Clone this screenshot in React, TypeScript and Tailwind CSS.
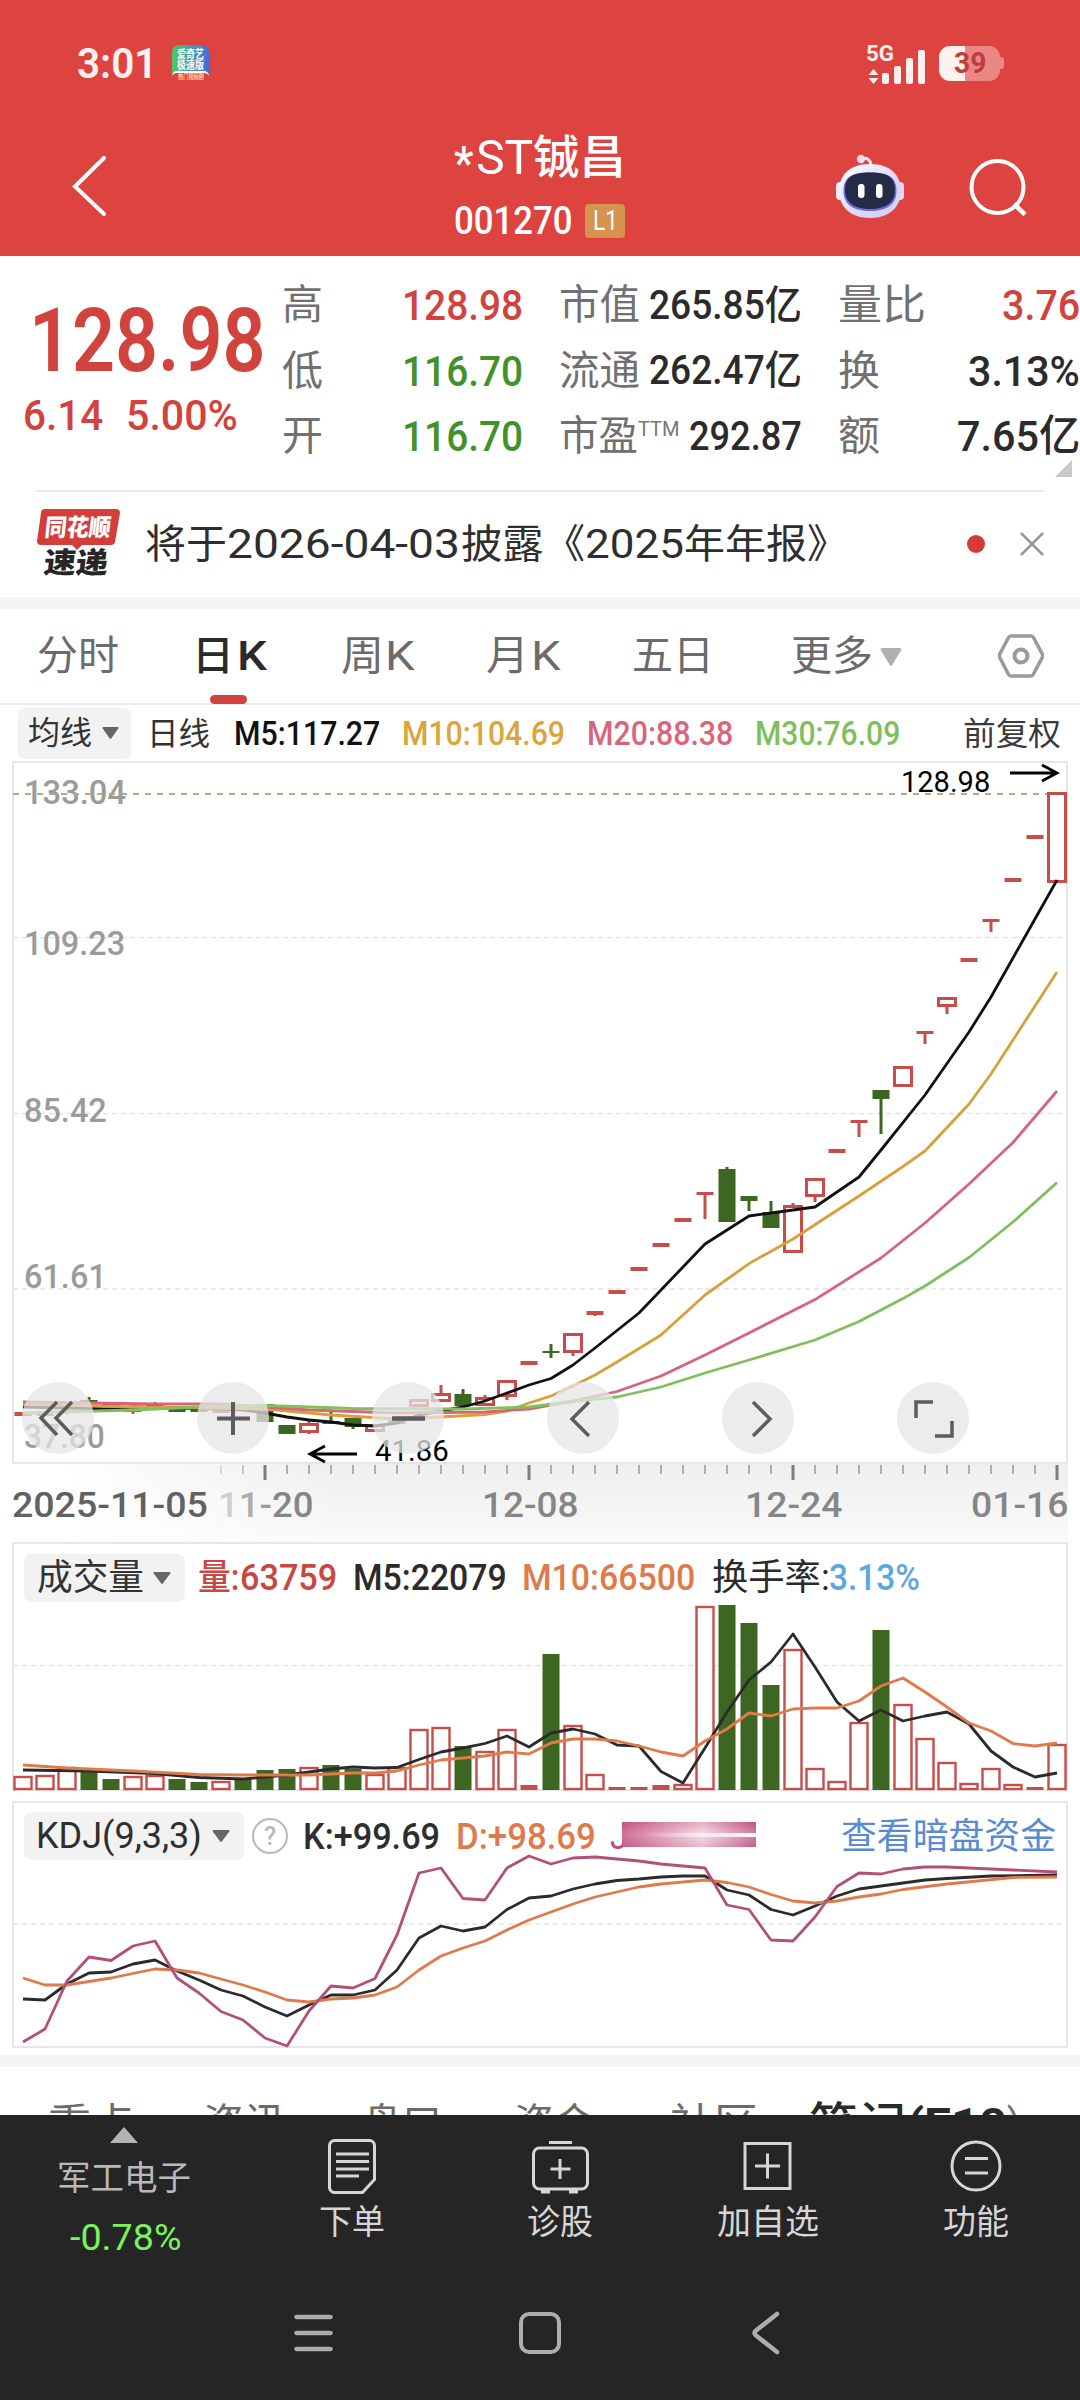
import { useLayoutEffect, useRef, useState } from 'react';
import type { ReactNode } from 'react';
import clsx from 'clsx';

const RED = '#c84c4a';
const GREEN = '#3c6621';

// x centre of the i-th trading day inside a panel
const dayX = (i: number) => 23 + i * 22;

type Point = [number, number];

// [kind, bodyTop, bodyBottom, high, low]
type Candle = ['r' | 'g', number, number, number, number];

const CANDLES: Candle[] = [
  ['r', 1412, 1416, 1412, 1416],
  ['r', 1411, 1416, 1411, 1416],
  ['g', 1404, 1408, 1403, 1414],
  ['g', 1400, 1403, 1397, 1404],
  ['g', 1404, 1407, 1404, 1409],
  ['r', 1410, 1412, 1407, 1414],
  ['r', 1403, 1406, 1402, 1406],
  ['g', 1408, 1412, 1408, 1412],
  ['g', 1408, 1412, 1408, 1412],
  ['r', 1409, 1413, 1409, 1413],
  ['r', 1405, 1408, 1405, 1408],
  ['g', 1404, 1422, 1404, 1422],
  ['g', 1425, 1434, 1425, 1434],
  ['r', 1423, 1433, 1420, 1434],
  ['g', 1421, 1424, 1411, 1424],
  ['g', 1418, 1427, 1418, 1429],
  ['r', 1424, 1432, 1424, 1432],
  ['r', 1420, 1424, 1420, 1424],
  ['r', 1399, 1407, 1399, 1407],
  ['r', 1393, 1402, 1385, 1402],
  ['g', 1394, 1406, 1389, 1406],
  ['r', 1397, 1406, 1395, 1406],
  ['r', 1380, 1397, 1380, 1400],
  ['r', 1361, 1365, 1361, 1365],
  ['g', 1351, 1353, 1344, 1358],
  ['r', 1333, 1353, 1333, 1356],
  ['r', 1311, 1315, 1311, 1316],
  ['r', 1290, 1294, 1290, 1294],
  ['r', 1267, 1271, 1267, 1271],
  ['r', 1243, 1247, 1243, 1247],
  ['r', 1218, 1222, 1218, 1222],
  ['r', 1192, 1195, 1192, 1219],
  ['g', 1169, 1222, 1167, 1222],
  ['g', 1196, 1201, 1196, 1211],
  ['g', 1212, 1228, 1201, 1228],
  ['r', 1205, 1253, 1203, 1253],
  ['r', 1178, 1197, 1178, 1202],
  ['r', 1149, 1153, 1149, 1153],
  ['r', 1120, 1123, 1120, 1137],
  ['g', 1090, 1099, 1090, 1134],
  ['r', 1066, 1087, 1066, 1087],
  ['r', 1031, 1034, 1031, 1044],
  ['r', 997, 1007, 997, 1014],
  ['r', 958, 962, 958, 962],
  ['r', 919, 922, 919, 932],
  ['r', 878, 882, 878, 882],
  ['r', 835, 839, 835, 839],
  ['r', 792, 883, 792, 883],
];

const MA5: Point[] = [
  [0, 1407], [4, 1409], [5, 1407], [9, 1409], [10, 1410], [11, 1413], [12, 1417], [13, 1420], [14, 1422], [15, 1425],
  [16, 1426], [17, 1423], [18, 1415], [19, 1411], [20, 1407], [21, 1401], [22, 1393], [23, 1385], [24, 1378.5],
  [25, 1365], [26, 1348], [28, 1313], [31, 1244], [33, 1216], [36, 1207], [38, 1177], [39, 1150], [41, 1095],
  [43, 1032], [44, 997], [47, 880],
];
const MA10: Point[] = [
  [0, 1404], [5, 1407], [11, 1409], [14, 1415], [17, 1419], [19, 1417], [21, 1414.5], [22, 1411], [23, 1403], [24, 1396],
  [25, 1386], [26, 1375], [27, 1362], [29, 1335], [31, 1295], [33, 1263.6], [35, 1239], [38, 1196], [40, 1166.5],
  [41, 1151], [43, 1104], [44, 1074], [47, 972],
];
const MA20: Point[] = [
  [0, 1402], [6, 1404], [9, 1404], [13, 1410], [17, 1413], [21, 1412], [23, 1409], [25, 1401], [27, 1391.5], [29, 1376],
  [31, 1355], [33, 1333], [36, 1299.6], [39, 1258], [41, 1223], [43, 1184], [45, 1142.5], [47, 1091],
];
const MA30: Point[] = [
  [0, 1413], [5, 1410], [8, 1407], [11, 1405.5], [15, 1408.5], [20, 1409], [23, 1407], [25, 1401.5], [27, 1397],
  [29, 1387], [31, 1373], [33, 1360], [36, 1340], [38, 1321.5], [40, 1298.6], [41, 1286], [43, 1257.5], [45, 1222],
  [47, 1182.5],
];

const VOLUMES: ['r' | 'g', number][] = [
  ['r', 1776], ['r', 1775], ['r', 1767], ['g', 1772], ['g', 1779], ['r', 1776], ['r', 1775], ['g', 1779], ['g', 1782],
  ['r', 1781], ['g', 1779], ['g', 1770], ['g', 1769], ['r', 1767], ['g', 1765], ['g', 1769], ['r', 1774], ['r', 1767],
  ['r', 1729], ['r', 1727], ['g', 1746], ['r', 1751], ['r', 1729], ['r', 1785], ['g', 1654], ['r', 1725], ['r', 1774],
  ['r', 1787], ['r', 1787], ['r', 1785], ['r', 1784], ['r', 1606], ['g', 1605], ['g', 1623], ['g', 1685], ['r', 1649],
  ['r', 1768], ['r', 1781], ['r', 1722], ['g', 1630], ['r', 1704], ['r', 1738], ['r', 1762], ['r', 1783], ['r', 1768],
  ['r', 1784], ['r', 1787], ['r', 1744],
];
const VOL5: Point[] = [
  [0, 1770], [3, 1771], [6, 1773.5], [8, 1777.5], [10, 1779], [11, 1777], [12, 1775], [13, 1772], [14, 1769], [15, 1767],
  [16, 1768], [17, 1767.5], [18, 1759.5], [19, 1752], [20, 1748], [21, 1743.5], [22, 1736], [23, 1747], [24, 1733],
  [25, 1729], [26, 1734], [27, 1745], [28, 1746], [29, 1771.5], [30, 1783], [31, 1748], [32, 1712], [33, 1680],
  [34, 1662], [35, 1634], [36, 1667], [37, 1702], [38, 1721], [39, 1710], [40, 1721], [41, 1716], [42, 1712],
  [43, 1724], [44, 1751], [45, 1767], [46, 1777], [47, 1773],
];
const VOL10: Point[] = [
  [0, 1765], [2, 1768], [5, 1771], [8, 1774.5], [10, 1775], [13, 1775], [15, 1773], [16, 1773], [17, 1771], [18, 1765],
  [19, 1760], [20, 1758], [21, 1756], [22, 1752], [23, 1754], [24, 1743], [25, 1739], [26, 1739], [27, 1741],
  [28, 1746], [29, 1752], [30, 1756], [31, 1741], [32, 1729], [33, 1713], [34, 1716], [35, 1709], [36, 1708],
  [37, 1708], [38, 1701], [39, 1686], [40, 1678], [41, 1692], [42, 1707], [43, 1723], [44, 1731], [45, 1743.5],
  [46, 1746], [47, 1743],
];

const K_LINE: Point[] = [
  [0, 1999], [1, 2000], [2, 1984], [3, 1973], [4, 1972], [5, 1964], [6, 1960], [7, 1971], [8, 1980], [9, 1990],
  [10, 1996], [11, 2007], [12, 2016], [13, 2005], [14, 1995], [15, 1995], [16, 1990], [17, 1970], [18, 1938],
  [19, 1926], [20, 1931], [21, 1927], [22, 1909.5], [23, 1898], [24, 1896], [25, 1889], [26, 1884], [27, 1880.5],
  [28, 1879], [29, 1877], [30, 1876], [31, 1876], [32, 1890], [33, 1895], [34, 1909.5], [35, 1915], [36, 1906],
  [37, 1896], [38, 1889], [39, 1886], [40, 1883], [41, 1880], [42, 1878.5], [44, 1876], [47, 1875],
];
const D_LINE: Point[] = [
  [0, 1978], [1, 1985], [2, 1985], [4, 1978], [6, 1969], [7, 1970], [8, 1973], [10, 1985], [11, 1992], [12, 2000],
  [13, 2002], [14, 1999], [15, 1998], [16, 1995], [17, 1987], [18, 1970], [19, 1956], [20, 1948], [21, 1941],
  [22, 1930], [23, 1920], [24, 1912], [25, 1904], [26, 1897], [27, 1892], [28, 1887], [29, 1884], [31, 1880],
  [32, 1882.5], [33, 1887], [34, 1894.5], [35, 1901], [36, 1903], [37, 1901], [38, 1897], [39, 1894], [40, 1889.5],
  [42, 1884], [45, 1877.5], [47, 1877],
];
const J_LINE: Point[] = [
  [0, 2042], [1, 2029], [2, 1981], [3, 1957], [4, 1960.5], [5, 1946], [6, 1941], [7, 1978], [8, 1993], [9, 2011.5],
  [10, 2020], [11, 2038], [12, 2046], [13, 2011], [14, 1986], [15, 1988], [16, 1978.5], [17, 1935], [18, 1873],
  [19, 1868], [20, 1898.5], [21, 1900], [22, 1868], [23, 1856], [24, 1864], [25, 1858], [26, 1857], [27, 1859],
  [28, 1861], [29, 1864], [30, 1866], [31, 1868], [32, 1905], [33, 1909.5], [34, 1940], [35, 1941], [36, 1917],
  [37, 1886.5], [38, 1873], [39, 1874], [40, 1869], [41, 1867], [42, 1867], [44, 1869], [47, 1872],
];

// Condenses or stretches a run of text to a fixed width
function Fit({ w, className, children }: { w: number; className?: string; children: ReactNode }) {
  const ref = useRef<HTMLSpanElement>(null);
  const [scale, setScale] = useState(1);
  useLayoutEffect(() => {
    if (ref.current) setScale(w / ref.current.offsetWidth);
  }, [w]);
  return (
    <span className={clsx('block shrink-0 whitespace-nowrap leading-none', className)} style={{ width: w }}>
      <span ref={ref} className="inline-block origin-left" style={{ transform: `scaleX(${scale})` }}>
        {children}
      </span>
    </span>
  );
}

function Line({ points, color, width = 2.8 }: { points: Point[]; color: string; width?: number }) {
  return (
    <polyline
      points={points.map(([i, y]) => `${dayX(i)},${y}`).join(' ')}
      fill="none"
      stroke={color}
      strokeWidth={width}
      strokeLinejoin="round"
    />
  );
}

function Caret({ className }: { className?: string }) {
  return (
    <svg className={clsx('shrink-0', className)} viewBox="0 0 18 12" preserveAspectRatio="none">
      <path d="M1.5 0h15a1 1 0 0 1 .8 1.600L9.800 11.500a1 1 0 0 1-1.600 0L.7 1.600A1 1 0 0 1 1.500 0Z" fill="currentColor" />
    </svg>
  );
}

function StatusBar() {
  return (
    <div className="flex h-[126px] items-center pl-[77px]">
      <Fit w={80} className="text-[43px] font-semibold text-[#fff1f0]">3:01</Fit>
      <div className="ml-[15px] flex h-[36px] w-[37px] flex-col items-center rounded-[7px] bg-linear-to-r from-[#4fc765] to-[#4a68dc] pt-[4px]">
        <Fit w={27} className="text-[11px] font-bold text-white">爱奇艺</Fit>
        <Fit w={27} className="text-[11px] font-bold text-white">极速版</Fit>
        <div className="flex w-full flex-1 items-center justify-center rounded-t-[5px] border-t-2 border-white bg-[#dd4440]">
          <Fit w={26} className="text-[7px] font-bold text-[#ffd9a0]">热门视频剧</Fit>
        </div>
      </div>
      <svg className="ml-[658px] h-[42px] w-[62px] overflow-visible" viewBox="0 0 62 42">
        <text x="-1" y="19" fontSize="22" fontWeight="700" fill="#ffefee" textLength="28" lengthAdjust="spacingAndGlyphs">5G</text>
        <path d="M6.500 27l5 6h-10zM6.500 42l5-6h-10z" fill="#ffefee" />
        <rect x="15" y="31" width="7" height="11" rx="2" fill="#ffefee" />
        <rect x="27" y="24" width="7" height="18" rx="2" fill="#ffefee" />
        <rect x="39" y="16" width="7" height="26" rx="2" fill="#ffefee" />
        <rect x="51" y="8" width="7" height="34" rx="2" fill="#ffefee" />
      </svg>
      <div className="ml-[10px] flex items-center">
        <div className="flex h-[35px] w-[61px] items-center justify-center rounded-[11px] bg-linear-to-r from-[#fff1f0] from-42% to-[#ec8684] to-42%">
          <Fit w={32} className="text-[29px] font-bold text-[#bd3e3a]">39</Fit>
        </div>
        <div className="h-[12px] w-[4px] rounded-r-[3px] bg-[#ec8684]" />
      </div>
    </div>
  );
}

function RobotIcon() {
  return (
    <svg className="h-[66px] w-[70px]" viewBox="0 0 70 66">
      <defs>
        <linearGradient id="head" x1="0" y1="0" x2="1" y2="1">
          <stop offset="0" stopColor="#fff" />
          <stop offset="0.600" stopColor="#ddd8f8" />
          <stop offset="1" stopColor="#d3cbf6" />
        </linearGradient>
      </defs>
      <path d="M26 5c6-2 10 1 10 7" fill="none" stroke="#f6e6ea" strokeWidth="3" />
      <circle cx="26" cy="5" r="4.200" fill="#f6dfe3" />
      <rect x="1" y="28" width="10" height="18" rx="4" fill="#f3effc" />
      <rect x="59" y="28" width="10" height="18" rx="4" fill="#e0dbf8" />
      <path d="M35 10c20 0 31 11 31 27S54 64 35 64 4 53 4 37s11-27 31-27Z" fill="url(#head)" />
      <path d="M35 18.500c19 0 26.500 5 26.500 18.500S52 57 35 57 8.500 50.500 8.500 37 16 18.500 35 18.500Z" fill="#7068dc" />
      <path d="M35 18.500c18 0 25 5 25 17.500S51 55 35 55 10 48.500 10 36s7-17.500 25-17.500Z" fill="#222c46" />
      <rect x="23" y="30" width="6.500" height="14" rx="3" fill="#fff" />
      <rect x="41" y="30" width="6.500" height="14" rx="3" fill="#fff" />
    </svg>
  );
}

function Header() {
  return (
    <div className="flex h-[130px] pl-[71px] text-white">
      <svg className="mt-[30px] h-[60px] w-[36px]" viewBox="0 0 36 60" fill="none" stroke="currentColor" strokeWidth="4">
        <path d="M33 2 4 30.500 33 58" strokeLinecap="round" />
      </svg>
      <div className="ml-[347px] flex w-[180px] flex-col pt-[2px]">
        <div className="flex h-[60px] items-center">
          <Fit w={19} className="pt-[12px] text-[46px] font-medium">*</Fit>
          <Fit w={57} className="ml-[3px] text-[49px]">ST</Fit>
          <Fit w={93} className="text-[46px] font-medium">铖昌</Fit>
        </div>
        <div className="flex h-[72px] items-center">
          <Fit w={119} className="text-[38px] font-medium">001270</Fit>
          <div className="ml-[12px] flex h-[34px] w-[40px] items-center justify-center rounded-[4px] bg-[#d6924f]">
            <Fit w={25} className="text-[28px]">L1</Fit>
          </div>
        </div>
      </div>
      <div className="ml-[201px] mt-[28px]">
        <RobotIcon />
      </div>
      <svg className="ml-[64px] mt-[32px] h-[60px] w-[62px]" viewBox="0 0 62 60" fill="none" stroke="currentColor" strokeWidth="4">
        <circle cx="28.500" cy="29" r="26" />
        <path d="M45 46l11 10.500" strokeWidth="4.500" />
      </svg>
    </div>
  );
}

function Quote() {
  const row = 'flex h-[65.5px] items-center';
  const label = 'text-[41px] text-[#707070]';
  const value = 'ml-auto text-[43px] font-medium';
  return (
    <div className="relative flex h-[234px] pt-[17px]">
      <div className="w-[282px]">
        <div className="flex h-[132px] items-center pl-[29px] pt-[2px]">
          <Fit w={237} className="text-[89px] font-semibold text-[#d1433d]">128.98</Fit>
        </div>
        <div className="flex h-[20px] items-center pl-[23px] text-[43px] font-medium text-[#d1433d]">
          <Fit w={80}>6.14</Fit>
          <Fit w={112} className="ml-[23px]">5.00%</Fit>
        </div>
      </div>
      <div className="w-[241px]">
        <div className={row}>
          <Fit w={41} className={label}>高</Fit>
          <Fit w={121} className={clsx(value, 'text-[#d1433d]')}>128.98</Fit>
        </div>
        <div className={row}>
          <Fit w={41} className={label}>低</Fit>
          <Fit w={121} className={clsx(value, 'text-[#42922b]')}>116.70</Fit>
        </div>
        <div className={row}>
          <Fit w={41} className={label}>开</Fit>
          <Fit w={121} className={clsx(value, 'text-[#42922b]')}>116.70</Fit>
        </div>
      </div>
      <div className="ml-[36px] w-[243px] text-[#2b2b2b]">
        <div className={row}>
          <Fit w={81} className={label}>市值</Fit>
          <Fit w={153} className="ml-auto text-[40px] font-medium">265.85亿</Fit>
        </div>
        <div className={row}>
          <Fit w={81} className={label}>流通</Fit>
          <Fit w={153} className="ml-auto text-[40px] font-medium">262.47亿</Fit>
        </div>
        <div className={row}>
          <Fit w={79} className={label}>市盈</Fit>
          <Fit w={42} className="-mt-[14px] text-[21px] text-[#777]">TTM</Fit>
          <Fit w={113} className="ml-auto text-[40px] font-medium">292.87</Fit>
        </div>
      </div>
      <div className="ml-[36px] w-[242px] text-[#2b2b2b]">
        <div className={row}>
          <Fit w={88} className={label}>量比</Fit>
          <Fit w={78} className={clsx(value, 'text-[#d1433d]')}>3.76</Fit>
        </div>
        <div className={row}>
          <Fit w={42} className={label}>换</Fit>
          <Fit w={112} className={value}>3.13%</Fit>
        </div>
        <div className={row}>
          <Fit w={42} className={label}>额</Fit>
          <Fit w={123} className={value}>7.65亿</Fit>
        </div>
      </div>
      <svg className="absolute bottom-[13px] right-[8px] size-[17px]" viewBox="0 0 17 17">
        <path d="M17 0v17H0z" fill="#cacaca" />
      </svg>
    </div>
  );
}

function News() {
  return (
    <div className="mx-[36px] flex h-[107px] items-start border-t-2 border-[#ebebeb]">
      <div className="relative mt-[17px] h-[70px] w-[84px]">
        <svg className="absolute inset-0 size-full" viewBox="0 0 84 70">
          <path d="M9 0h71a4 4 0 0 1 4 4l-5 29a4 4 0 0 1-4 3H46l-5 5-5-5H5a4 4 0 0 1-4-4L5 4a4 4 0 0 1 4-4Z" fill="#d23f3b" />
        </svg>
        <div className="relative flex h-[37px] -skew-x-6 items-center justify-center">
          <Fit w={66} className="text-[24px] font-black text-white">同花顺</Fit>
        </div>
        <div className="relative flex h-[34px] -skew-x-6 items-center pl-[8px]">
          <Fit w={64} className="text-[29px] font-black text-[#262626]">速递</Fit>
        </div>
      </div>
      <div className="ml-[25px] flex h-[105px] items-center text-[40px] text-[#2e2e2e]">
        <Fit w={82}>将于</Fit>
        <Fit w={233}>2026-04-03</Fit>
        <Fit w={124} className="ml-[1px]">披露《</Fit>
        <Fit w={99}>2025</Fit>
        <Fit w={164}>年年报》</Fit>
      </div>
      <div className="ml-auto mt-[43px] size-[18px] rounded-full bg-[#d33b34]" />
      <svg className="-mr-[1px] ml-[35px] mt-[40px] h-[24px] w-[25px]" viewBox="0 0 25 24" stroke="#999" strokeWidth="2.600">
        <path d="M1 1l22 22M23 1 1 23" />
      </svg>
    </div>
  );
}

function PeriodTabs() {
  return (
    <div className="flex h-[96px] items-center border-b-2 border-[#ebebeb] pl-[37px] text-[41px] text-[#6b6b6b]">
      <Fit w={82}>分时</Fit>
      <div className="relative ml-[73px] flex items-center text-[#2a2a2a]">
        <Fit w={42} className="font-medium">日</Fit>
        <Fit w={30} className="ml-[3px] font-medium">K</Fit>
        <div className="absolute -bottom-[27px] left-[18px] h-[9px] w-[37px] rounded-full bg-[#d1433d]" />
      </div>
      <div className="ml-[74px] flex items-center">
        <Fit w={43}>周</Fit>
        <Fit w={30} className="ml-[1px]">K</Fit>
      </div>
      <div className="ml-[71px] flex items-center">
        <Fit w={43}>月</Fit>
        <Fit w={30} className="ml-[2px]">K</Fit>
      </div>
      <Fit w={82} className="ml-[71px]">五日</Fit>
      <Fit w={82} className="ml-[77px]">更多</Fit>
      <Caret className="ml-[7px] mt-[2px] h-[18px] w-[22px] text-[#b0b0b0]" />
      <svg className="ml-[96px] h-[44px] w-[46px]" viewBox="0 0 46 44" fill="none" stroke="#9a9a9a">
        <path d="M13 2h20a3 3 0 0 1 2.500 1.500l8.500 16a4 4 0 0 1 0 4.500l-8.500 16A3 3 0 0 1 33 42H13a3 3 0 0 1-2.500-1.500L2 24a4 4 0 0 1 0-4.500l8.500-16A3 3 0 0 1 13 2Z" strokeWidth="3.500" />
        <circle cx="23" cy="22" r="6.500" strokeWidth="4" />
      </svg>
    </div>
  );
}

function MaLegend() {
  return (
    <div className="flex h-[56px] items-center pl-[18px] text-[33px] font-medium">
      <div className="flex h-[51px] w-[113px] items-center rounded-[7px] bg-[#f2f2f2] pl-[10px] text-[32px] font-normal text-[#333]">
        <Fit w={64}>均线</Fit>
        <Caret className="ml-[10px] h-[12px] w-[17px] text-[#666]" />
      </div>
      <Fit w={63} className="ml-[16px] mt-px text-[32px] font-normal text-[#333]">日线</Fit>
      <Fit w={146} className="ml-[24px] mt-px text-[#111]">M5:117.27</Fit>
      <Fit w={163} className="ml-[22px] mt-px text-[#dba43d]">M10:104.69</Fit>
      <Fit w={146} className="ml-[22px] mt-px text-[#d9647c]">M20:88.38</Fit>
      <Fit w={145} className="ml-[22px] mt-px text-[#7fbf5b]">M30:76.09</Fit>
      <Fit w={98} className="ml-[63px] mt-px text-[32px] font-normal text-[#3a3a3a]">前复权</Fit>
    </div>
  );
}

function CandleShape({ candle, index }: { candle: Candle; index: number }) {
  const [kind, top, bottom, high, low] = candle;
  const x = dayX(index);
  const color = kind === 'r' ? RED : GREEN;
  const hollow = kind === 'r' && bottom - top > 6;
  return (
    <g>
      {high < top && <rect x={x - 1.5} y={high} width={3} height={top - high} fill={color} />}
      {low > bottom && <rect x={x - 1.5} y={bottom} width={3} height={low - bottom} fill={color} />}
      {hollow ? (
        <rect x={x - 8.5} y={top + 1.5} width={17} height={bottom - top - 3} fill="#fff" stroke={color} strokeWidth={3} />
      ) : (
        <rect x={x - 8.5} y={top} width={17} height={bottom - top} fill={color} />
      )}
    </g>
  );
}

const TOOLS: ReactNode[] = [
  <path key="first" d="M35 20 19 36l16 17M50 20 34 36l16 17" />,
  <path key="in" d="M36 20v33M20 36.500h33" strokeWidth="4" />,
  <path key="out" d="M20 36.500h33" strokeWidth="4.500" />,
  <path key="prev" d="M42 20 25 37l17 17" />,
  <path key="next" d="M31 20l17 17-17 17" />,
  <path key="full" d="M19 36V20h17M55 39v15H38" />,
];

function PriceChart() {
  const axis = 'absolute left-[24px] text-[34px] font-medium text-[#9b9b9b]';
  return (
    <div className="relative h-[703px]">
      <svg className="block h-[703px] w-[1080px]" viewBox="0 761 1080 703">
        <rect x="13" y="762" width="1054" height="701" fill="none" stroke="#e6e6e6" strokeWidth="2" />
        {[937.5, 1113.5, 1289].map((y) => (
          <path key={y} d={`M13 ${y}h1054`} stroke="#e2e2e2" strokeWidth="1.500" strokeDasharray="5 4" />
        ))}
      </svg>
      <Fit w={102} className={clsx(axis, 'top-[14px]')}>133.04</Fit>
      <Fit w={101} className={clsx(axis, 'top-[165px]')}>109.23</Fit>
      <Fit w={83} className={clsx(axis, 'top-[332px]')}>85.42</Fit>
      <Fit w={83} className={clsx(axis, 'top-[498px]')}>61.61</Fit>
      <Fit w={81} className={clsx(axis, 'top-[658px]')}>37.80</Fit>
      <svg className="absolute inset-0 h-[703px] w-[1080px]" viewBox="0 761 1080 703">
        <path d="M13 794h1044" stroke="#b5ad7e" strokeWidth="2" strokeDasharray="6 6" />
        {CANDLES.map((c, i) => (
          <CandleShape key={i} candle={c} index={i} />
        ))}
        <Line points={MA5} color="#111" />
        <Line points={MA10} color="#d8a03a" />
        <Line points={MA20} color="#d8647a" />
        <Line points={MA30} color="#7fc05c" />
        <g fill="none" stroke="#000" strokeWidth="2.800">
          <path d="M1010 773h47M1042 765l15 8-15 8" />
          <path d="M357 1454h-47M325 1446l-15 8 15 8" />
        </g>
      </svg>
      <Fit w={89} className="absolute left-[901px] top-[6px] text-[30px] text-black">128.98</Fit>
      <Fit w={74} className="absolute left-[375px] top-[676px] text-[29px] text-black">41.86</Fit>
      <div className="absolute left-[22px] top-[621px] flex gap-[103px]">
        {TOOLS.map((icon, i) => (
          <div key={i} className="size-[72px] rounded-full bg-[#e6e6e6]/75">
            <svg className="size-[72px]" viewBox="0 0 72 72" fill="none" stroke="#5c5c5c" strokeWidth="3.500">
              {icon}
            </svg>
          </div>
        ))}
      </div>
    </div>
  );
}

function DateAxis() {
  return (
    <div className="relative mx-[12px] h-[77px] bg-linear-to-b from-[#eeeeee] to-[#fafafa]">
      <div className="absolute inset-y-0 left-0 w-[330px] bg-linear-to-r from-white from-15% to-white/0" />
      <svg className="absolute -left-[12px] top-0 h-[20px] w-[1080px]" viewBox="0 0 1080 20">
        {CANDLES.map((_, i) =>
          i < 9 ? null : i % 12 === 11 ? (
            <rect key={i} x={dayX(i) - 1.5} y="1" width="3" height="15" fill="#7d7d7d" />
          ) : (
            <rect key={i} x={dayX(i) - 0.75} y="1" width="1.500" height="9" fill="#999" opacity={i === 9 ? 0.4 : i === 10 ? 0.7 : 1} />
          ),
        )}
      </svg>
      <div className="relative flex h-full items-center pt-[6px] text-[35px] font-medium text-[#868686]">
        <Fit w={196} className="text-[#616161]">2025-11-05</Fit>
        <Fit w={96} className="ml-[10px]">
          <span className="text-[#cfcfcf]">1</span>
          <span className="text-[#aeaeae]">1</span>
          <span className="text-[#9a9a9a]">-</span>20
        </Fit>
        <Fit w={96} className="ml-[168px]">12-08</Fit>
        <Fit w={97} className="ml-[167px]">12-24</Fit>
        <Fit w={97} className="ml-auto">01-16</Fit>
      </div>
    </div>
  );
}

function VolumePanel() {
  return (
    <div className="relative h-[260px]">
      <svg className="absolute inset-0 h-[260px] w-[1080px]" viewBox="0 1541 1080 260">
        <rect x="13" y="1543" width="1054" height="247" fill="#fff" stroke="#e6e6e6" strokeWidth="2" />
        <path d="M13 1665.500h1054" stroke="#e2e2e2" strokeWidth="1.500" strokeDasharray="5 4" />
        {VOLUMES.map(([kind, top], i) =>
          kind === 'g' || top > 1784 ? (
            <rect key={i} x={dayX(i) - 8.5} y={top} width={17} height={1790 - top} fill={kind === 'g' ? GREEN : RED} />
          ) : (
            <rect key={i} x={dayX(i) - 8.5} y={top + 1} width={17} height={1788 - top} fill="#fff" stroke={RED} strokeWidth={2.4} />
          ),
        )}
        <Line points={VOL5} color="#2b2b2b" />
        <Line points={VOL10} color="#de7a4b" />
      </svg>
      <div className="relative flex h-[74px] items-center pl-[24px] text-[36px] font-medium">
        <div className="flex h-[48px] w-[161px] items-center rounded-[7px] bg-[#f2f2f2] pl-[13px] font-normal text-[#333]">
          <Fit w={107}>成交量</Fit>
          <Caret className="ml-[9px] h-[12px] w-[18px] text-[#666]" />
        </div>
        <Fit w={42} className="ml-[13px] text-[#c94742]">量:</Fit>
        <Fit w={97} className="text-[#c94742]">63759</Fit>
        <Fit w={154} className="ml-[16px] text-[#2b2b2b]">M5:22079</Fit>
        <Fit w={173} className="ml-[15px] text-[#de7a4b]">M10:66500</Fit>
        <Fit w={118} className="ml-[17px] font-normal text-[#2b2b2b]">换手率:</Fit>
        <Fit w={91} className="-ml-[1px] text-[#5ba7e0]">3.13%</Fit>
      </div>
    </div>
  );
}

function KdjPanel() {
  return (
    <div className="relative h-[254px]">
      <svg className="absolute inset-0 h-[254px] w-[1080px]" viewBox="0 1801 1080 254">
        <rect x="13" y="1802" width="1054" height="245" fill="none" stroke="#e6e6e6" strokeWidth="2" />
        <path d="M13 1924h1054" stroke="#e2e2e2" strokeWidth="1.500" strokeDasharray="5 4" />
        <Line points={K_LINE} color="#2b2b2b" />
        <Line points={D_LINE} color="#de7a4b" />
        <Line points={J_LINE} color="#b2507a" />
      </svg>
      <div className="relative flex h-[70px] items-center pl-[24px] text-[36px] text-[#2e2e2e]">
        <div className="flex h-[48px] w-[220px] items-center rounded-[7px] bg-[#f2f2f2] pl-[12px]">
          <Fit w={166}>KDJ(9,3,3)</Fit>
          <Caret className="ml-[10px] h-[12px] w-[18px] text-[#666]" />
        </div>
        <div className="ml-[8px] flex size-[36px] items-center justify-center rounded-full border-[2.5px] border-[#b9b9b9] text-[25px] font-medium leading-none text-[#b9b9b9]">
          ?
        </div>
        <Fit w={137} className="ml-[15px] mt-px font-medium">K:+99.69</Fit>
        <Fit w={140} className="ml-[16px] mt-px font-medium text-[#de7a4b]">D:+98.69</Fit>
        <Fit w={18} className="ml-[14px] mt-px text-[#c04a7b]">J</Fit>
        <div className="relative -ml-[6px] -mt-[3px] h-[25px] w-[134px] bg-linear-to-b from-[#c2668f] via-[#f0d3e0] to-[#cf7fa3]">
          <div className="absolute inset-0 bg-linear-to-r from-[#c04a7b]/70 via-[#f7e4ec]/60 via-60% to-[#b8487a]/60" />
          <div className="absolute bottom-[10px] right-0 h-[4px] w-[110px] bg-linear-to-r from-white/0 to-white" />
        </div>
        <Fit w={215} className="ml-auto mr-[24px] mt-px text-[#5a8ad6]">查看暗盘资金</Fit>
      </div>
    </div>
  );
}

function SectionTabs() {
  return (
    <div className="h-[48px] overflow-hidden">
      <div className="flex pl-[48px] pt-[37px] text-[41px] leading-none text-[#6b6b6b]">
        <Fit w={86}>重点</Fit>
        <Fit w={82} className="ml-[69px]">资讯</Fit>
        <Fit w={80} className="ml-[77px]">盘口</Fit>
        <Fit w={80} className="ml-[72px]">资金</Fit>
        <Fit w={88} className="ml-[76px]">社区</Fit>
        <div className="-mt-[2px] ml-[51px] flex text-[45px] font-medium text-[#2a2a2a]">
          <Fit w={98}>笔记</Fit>
          <Fit w={100} className="font-bold">(F10</Fit>
          <Fit w={14} className="font-normal text-[#777]">)</Fit>
        </div>
      </div>
    </div>
  );
}

function BottomBar() {
  const item = 'flex w-[208px] flex-col items-center pt-[23px]';
  const icon = 'h-[56px] w-[58px]';
  return (
    <div className="h-[285px] bg-[#252525]">
      <div className="flex h-[160px] text-[34px] text-[#d6d6d6]">
        <div className="flex w-[248px] flex-col items-center pt-[12px]">
          <svg className="h-[16px] w-[28px]" viewBox="0 0 28 16">
            <path d="M14 0l14 16H0z" fill="#b3b3b3" />
          </svg>
          <Fit w={134} className="mt-[18px] text-[#b9b9b9]">军工电子</Fit>
          <Fit w={112} className="ml-[3px] mt-[25px] text-[36px] text-[#79f25c]">-0.78%</Fit>
        </div>
        <div className={item}>
          <svg className={icon} viewBox="0 0 58 56" fill="none" stroke="currentColor" strokeWidth="3">
            <path d="M11.500 2.500h35a5 5 0 0 1 5 5v34l-12 13h-28a5 5 0 0 1-5-5v-42a5 5 0 0 1 5-5Z" />
            <path d="M13 16h33M13 23.500h33M13 31h33M13 38h23" />
          </svg>
          <Fit w={66} className="mt-[11px]">下单</Fit>
        </div>
        <div className={item}>
          <svg className={icon} viewBox="0 0 58 56" fill="none" stroke="currentColor" strokeWidth="3">
            <path d="M18 4.500h23" />
            <rect x="2.500" y="10" width="54" height="41" rx="6" />
            <path d="M29 21v20M19.500 31h20" />
            <path d="M10 53h9M38 53h9" strokeWidth="5" />
          </svg>
          <Fit w={66} className="mt-[11px]">诊股</Fit>
        </div>
        <div className={item}>
          <svg className={icon} viewBox="0 0 58 56" fill="none" stroke="currentColor" strokeWidth="3">
            <rect x="6" y="5.500" width="45" height="45" />
            <path d="M28.500 15.500v25M16 28h25" />
          </svg>
          <Fit w={102} className="mt-[11px]">加自选</Fit>
        </div>
        <div className={item}>
          <svg className={icon} viewBox="0 0 58 56" fill="none" stroke="currentColor" strokeWidth="3">
            <circle cx="29" cy="28" r="24" />
            <path d="M18 20.500h23M18 35h23" />
          </svg>
          <Fit w={66} className="mt-[11px]">功能</Fit>
        </div>
      </div>
      <div className="flex h-[116px] items-center pl-[294px] text-[#adadad]">
        <svg className="h-[42px] w-[39px]" viewBox="0 0 39 42" stroke="currentColor" strokeWidth="4.500" strokeLinecap="round">
          <path d="M2.500 5h34M2.500 21h34M2.500 37h34" />
        </svg>
        <div className="ml-[186px] size-[42px] rounded-[10px] border-[4.5px] border-current" />
        <svg className="ml-[190px] h-[44px] w-[30px]" viewBox="0 0 30 44" fill="none" stroke="currentColor" strokeWidth="4.500" strokeLinecap="round" strokeLinejoin="round">
          <path d="M26 3 5 19.500q-3 2.500 0 5L26 41" />
        </svg>
      </div>
    </div>
  );
}

export default function App() {
  return (
    <div className="h-[2400px] w-[1080px] overflow-hidden bg-white font-[Roboto,'Noto_Sans_CJK_SC',sans-serif]">
      <div className="h-[256px] bg-[#dd4440]">
        <StatusBar />
        <Header />
      </div>
      <Quote />
      <News />
      <div className="h-[12px] bg-[#f4f4f4]" />
      <PeriodTabs />
      <MaLegend />
      <PriceChart />
      <DateAxis />
      <VolumePanel />
      <KdjPanel />
      <div className="h-[12px] bg-[#f4f4f4]" />
      <SectionTabs />
      <BottomBar />
    </div>
  );
}
